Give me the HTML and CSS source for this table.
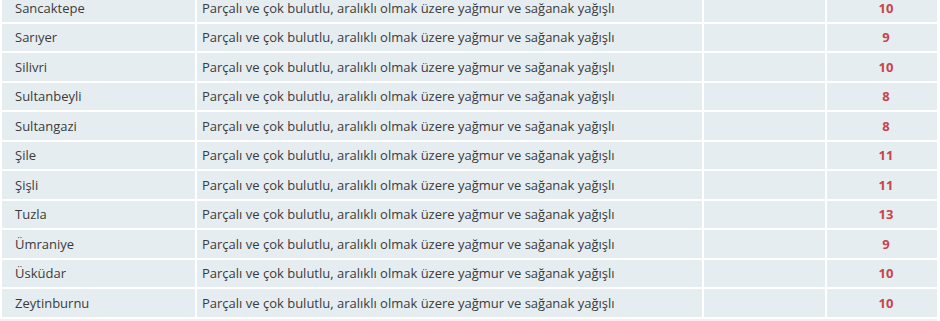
FILE: index.html
```html
<!DOCTYPE html>
<html>

<head>
    <meta charset="utf-8">
    <title>Hava Durumu - İlçeler</title>
    <link rel="stylesheet" href="styles.css">
</head>

<body>
    <table class="weather-table">
        <tr>
            <td class="district">Sancaktepe</td>
            <td class="desc">Parçalı ve çok bulutlu, aralıklı olmak üzere yağmur ve sağanak yağışlı</td>
            <td class="empty"></td>
            <td class="temp">10</td>
        </tr>
        <tr>
            <td class="district">Sarıyer</td>
            <td class="desc">Parçalı ve çok bulutlu, aralıklı olmak üzere yağmur ve sağanak yağışlı</td>
            <td class="empty"></td>
            <td class="temp">9</td>
        </tr>
        <tr>
            <td class="district">Silivri</td>
            <td class="desc">Parçalı ve çok bulutlu, aralıklı olmak üzere yağmur ve sağanak yağışlı</td>
            <td class="empty"></td>
            <td class="temp">10</td>
        </tr>
        <tr>
            <td class="district">Sultanbeyli</td>
            <td class="desc">Parçalı ve çok bulutlu, aralıklı olmak üzere yağmur ve sağanak yağışlı</td>
            <td class="empty"></td>
            <td class="temp">8</td>
        </tr>
        <tr>
            <td class="district">Sultangazi</td>
            <td class="desc">Parçalı ve çok bulutlu, aralıklı olmak üzere yağmur ve sağanak yağışlı</td>
            <td class="empty"></td>
            <td class="temp">8</td>
        </tr>
        <tr>
            <td class="district">Şile</td>
            <td class="desc">Parçalı ve çok bulutlu, aralıklı olmak üzere yağmur ve sağanak yağışlı</td>
            <td class="empty"></td>
            <td class="temp">11</td>
        </tr>
        <tr>
            <td class="district">Şişli</td>
            <td class="desc">Parçalı ve çok bulutlu, aralıklı olmak üzere yağmur ve sağanak yağışlı</td>
            <td class="empty"></td>
            <td class="temp">11</td>
        </tr>
        <tr>
            <td class="district">Tuzla</td>
            <td class="desc">Parçalı ve çok bulutlu, aralıklı olmak üzere yağmur ve sağanak yağışlı</td>
            <td class="empty"></td>
            <td class="temp">13</td>
        </tr>
        <tr>
            <td class="district">Ümraniye</td>
            <td class="desc">Parçalı ve çok bulutlu, aralıklı olmak üzere yağmur ve sağanak yağışlı</td>
            <td class="empty"></td>
            <td class="temp">9</td>
        </tr>
        <tr>
            <td class="district">Üsküdar</td>
            <td class="desc">Parçalı ve çok bulutlu, aralıklı olmak üzere yağmur ve sağanak yağışlı</td>
            <td class="empty"></td>
            <td class="temp">10</td>
        </tr>
        <tr>
            <td class="district">Zeytinburnu</td>
            <td class="desc">Parçalı ve çok bulutlu, aralıklı olmak üzere yağmur ve sağanak yağışlı</td>
            <td class="empty"></td>
            <td class="temp">10</td>
        </tr>
    </table>
    <div class="table-foot"></div>
</body>

</html>
```

FILE: styles.css
```css
body {
    margin: 0;
    background-color: #ffffff;
    font-family: "Open Sans", Arial, sans-serif;
    font-size: 13px;
    color: #3b3b3b;
    overflow: hidden;
}

.weather-table {
    width: 939px;
    margin-top: -8px;
    border-collapse: separate;
    border-spacing: 2px;
    table-layout: fixed;
}

.weather-table td {
    height: 27.5px;
    padding: 0;
    background-color: #e6edf1;
    vertical-align: middle;
    white-space: nowrap;
    box-sizing: border-box;
}

.weather-table .district {
    width: 193px;
    padding-left: 13px;
}

.weather-table .desc {
    width: 505px;
    padding-left: 5px;
}

.weather-table .empty {
    width: 121px;
}

.weather-table .temp {
    text-align: center;
    padding-left: 8px;
    font-weight: bold;
    color: #c8444b;
}

.table-foot {
    width: 937px;
    height: 10px;
    background-color: #eef2f5;
}
```
